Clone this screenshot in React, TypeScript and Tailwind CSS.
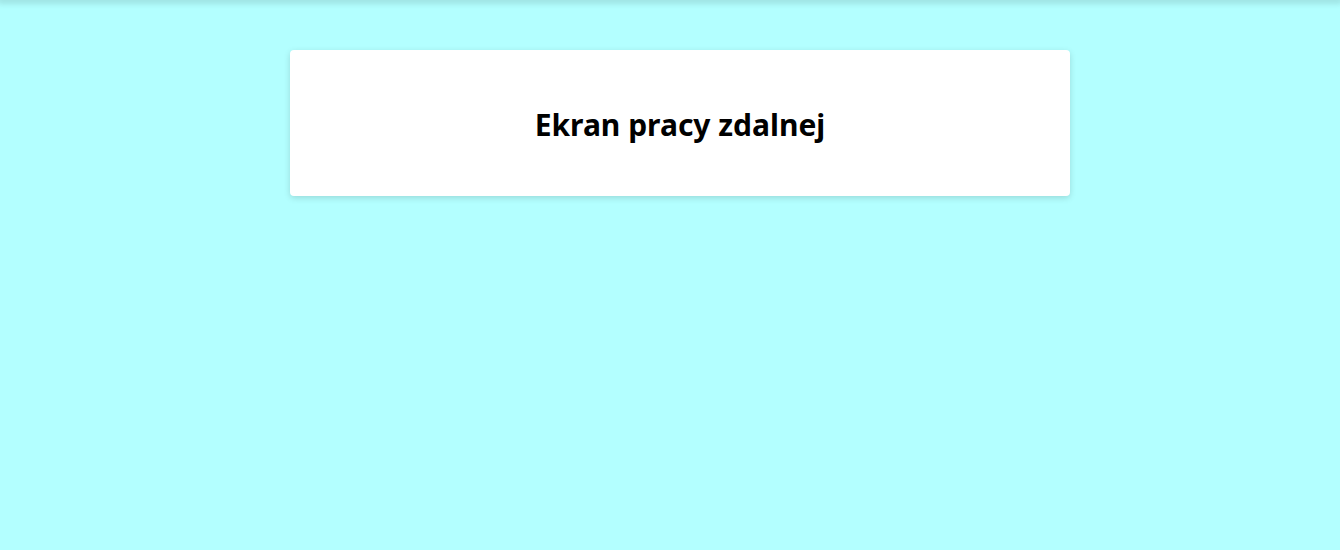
export default function App() {
  return (
    <div className="min-h-screen bg-[#b3ffff]" style={{ fontFamily: '"Noto Sans", "Open Sans", sans-serif' }}>
      {/* top bar shadow */}
      <div className="h-0 shadow-[0_0_6px_3px_rgba(0,0,0,0.15)]" />
      <main className="pt-[50px] pl-[290px]">
        <div className="w-[780px] h-[146px] bg-white rounded shadow-[0_2px_6px_rgba(0,0,0,0.15)] flex items-center justify-center pt-[2px]">
          <h1 className="text-[30px] font-bold text-black">Ekran pracy zdalnej</h1>
        </div>
      </main>
    </div>
  );
}
